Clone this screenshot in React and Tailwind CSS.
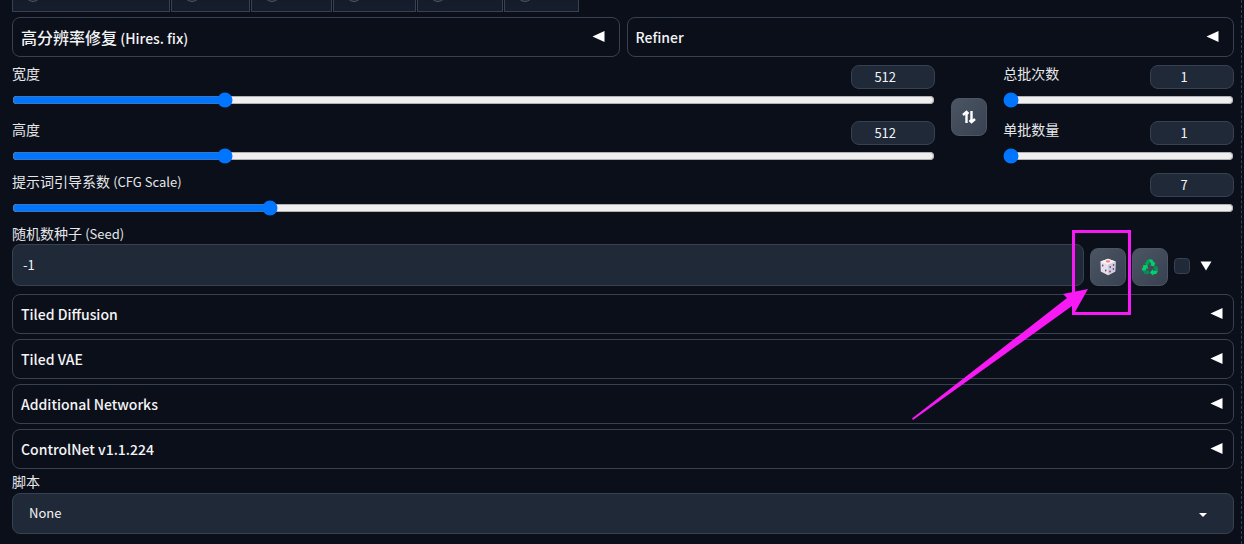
import { useState } from "react"

const samplers = [
  { name: "DPM++ 2M Karras", width: "w-[158px]" },
  { name: "DDIM", width: "w-[79px]" },
  { name: "PLMS", width: "w-[81px]" },
  { name: "UniPC", width: "w-[83px]" },
  { name: "Restart", width: "w-[86px]" },
  { name: "LCM", width: "w-[75px]" },
]

const SamplerTabs = () => (
  <div className="flex h-3 items-end gap-px overflow-hidden">
    {samplers.map((s) => (
      <label
        key={s.name}
        className={`flex h-10 shrink-0 items-end border border-[#374151] bg-linear-to-b from-[#111827] to-[#161d2d] px-3 pb-[9px] ${s.width}`}
      >
        <input
          type="radio"
          name="sampler"
          aria-label={s.name}
          className="size-4 appearance-none rounded-full border border-[#4b5563] bg-[#1f2937]"
        />
      </label>
    ))}
  </div>
)

const LeftArrow = () => (
  <svg width="13" height="12" viewBox="0 0 13 12" fill="#fff" aria-hidden="true">
    <path d="M0.5 5.5 12.5 0v11z" />
  </svg>
)

const Accordion = ({ title, className = "pr-2.5" }) => {
  const [open, setOpen] = useState(false)

  return (
    <button
      type="button"
      aria-expanded={open}
      onClick={() => setOpen(!open)}
      className={`flex h-10 w-full items-center justify-between rounded-lg border border-[#374151] pl-2 text-left text-sm font-medium text-gray-100 ${className}`}
    >
      <span>{title}</span>
      <LeftArrow />
    </button>
  )
}

const Slider = ({ id, label, min, max, initial }) => {
  const [value, setValue] = useState(initial)
  const onChange = (e) => setValue(e.target.value)

  return (
    <div>
      <div className="flex h-6 items-start justify-between">
        <label htmlFor={id} className="text-sm leading-4 text-gray-200">
          {label}
        </label>
        <input
          type="text"
          inputMode="numeric"
          aria-label={id}
          value={value}
          onChange={onChange}
          className="h-6 w-[84px] rounded-lg border border-[#374151] bg-[#1f2937] pr-4 pb-0.5 text-center text-[13px] text-gray-100"
        />
      </div>
      <input
        id={id}
        type="range"
        min={min}
        max={max}
        value={value}
        onChange={onChange}
        className="mt-[3px] block h-4 w-full"
      />
    </div>
  )
}

const ToolButton = ({ label, children }) => (
  <button
    type="button"
    aria-label={label}
    className="flex h-[38px] w-9 shrink-0 items-center justify-center rounded-lg border border-[#4b5563] bg-linear-to-br from-[#4b5563] to-[#374151] text-gray-100"
  >
    {children}
  </button>
)

const SwapIcon = () => (
  <svg width="14" height="14" viewBox="0 0 14 14" fill="none" stroke="#fff" strokeWidth="2.4">
    <path d="M4.5 13V2.5M1 5 4.5 1.8l2 2M9.5 1v10.5M7.5 10.2l2 2L13 9" />
  </svg>
)

const DiceIcon = () => (
  <svg width="18" height="18" viewBox="0 0 18 18">
    <path d="M9 0.8 16.6 3.6 16.2 13.6 9 17.2 1.8 13.6 1.4 3.6z" fill="#e6dfea" />
    <path d="M9 0.8 16.6 3.6 9 6.8 1.4 3.6z" fill="#f6f2f8" />
    <path d="M9 6.8 16.6 3.6 16.2 13.6 9 17.2z" fill="#d3c9dc" />
    <ellipse cx="9" cy="3.4" rx="2.2" ry="1.1" fill="#f8806f" />
    <g fill="#5f4d78">
      <ellipse cx="3.7" cy="7.6" rx="0.8" ry="1" />
      <ellipse cx="6.7" cy="12.6" rx="0.8" ry="1" />
      <ellipse cx="14.6" cy="7" rx="0.8" ry="1" />
      <ellipse cx="11.2" cy="9" rx="0.8" ry="1" />
      <ellipse cx="14.4" cy="11" rx="0.8" ry="1" />
      <ellipse cx="11" cy="13.4" rx="0.8" ry="1" />
    </g>
  </svg>
)

const RecycleIcon = () => (
  <svg width="18" height="18" viewBox="0 0 18 18">
    <path d="M6.5 1.5H10L7 7.5 3.6 5.6z" fill="#00a45a" />
    <path d="M8 1.5h3.2l1.9 3.2 1.3-.8-1.2 4.6-4.3-1.3 1.4-.8L8.6 3z" fill="#00d26a" />
    <path d="m1.5 7.5 4.6-1 1.2 4.4-1.5-.8L4.3 13H2L.8 11l1.6-2.8z" fill="#00d26a" />
    <path d="M1.6 12.6h6.6v3.7H3.7z" fill="#088c56" />
    <path d="m12.5 9.3 3.2-1.8 1.8 3.2-2.2 4.3h-1z" fill="#088c56" />
    <path d="m8.8 14.4 3.3-3.3v1.6h4.8l-1.7 3.4-3.1.2v1.5z" fill="#00d26a" />
  </svg>
)

// Highlight box and arrow over the random seed button
const Callout = () => (
  <svg
    className="pointer-events-none absolute -top-[18px] -left-[180px] z-10"
    width="222"
    height="192"
    viewBox="910 230 222 192"
    aria-hidden="true"
  >
    <rect x="1073.5" y="231.5" width="56" height="82" fill="none" stroke="#f81af5" strokeWidth="3" />
    <path d="M912 418.5 1067 298 1063 294 1088 289 1075 312 1072 306 913 420z" fill="#f81af5" />
  </svg>
)

export default function App() {
  const [seed, setSeed] = useState("-1")

  return (
    <div className="bg-[#0b0f19] pr-0.5 font-['Noto_Sans_CJK_SC',sans-serif]">
      <main className="flex min-h-screen flex-col border-r border-dashed border-[#374151] pr-[7px] pb-2.5 pl-3">
        <SamplerTabs />

        <div className="mt-[5px] grid grid-cols-2 gap-[7px]">
          <Accordion
            className="pr-3.5"
            title={
              <>
                <span className="text-base">高分辨率修复</span> (Hires. fix)
              </>
            }
          />
          <Accordion className="pr-3.5" title="Refiner" />
        </div>

        <div className="mt-2 flex gap-4">
          <div className="flex flex-[4] flex-col gap-[13px]">
            <Slider id="width" label="宽度" min={64} max={2048} initial={512} />
            <Slider id="height" label="高度" min={64} max={2048} initial={512} />
          </div>
          <div className="pt-[33px]">
            <ToolButton label="swap">
              <SwapIcon />
            </ToolButton>
          </div>
          <div className="flex flex-1 flex-col gap-[13px]">
            <Slider id="batch-count" label="总批次数" min={1} max={100} initial={1} />
            <Slider id="batch-size" label="单批数量" min={1} max={8} initial={1} />
          </div>
        </div>

        <div className="mt-[9px]">
          <Slider
            id="cfg-scale"
            label={
              <>
                提示词引导系数 <span className="text-[13px]">(CFG Scale)</span>
              </>
            }
            min={1}
            max={30}
            initial={7}
          />
        </div>

        <label htmlFor="seed" className="mt-[7px] text-sm leading-5 text-gray-200">
          随机数种子 <span className="text-[13px]">(Seed)</span>
        </label>
        <div className="flex items-end gap-1.5">
          <input
            id="seed"
            type="text"
            value={seed}
            onChange={(e) => setSeed(e.target.value)}
            className="h-[42px] min-w-0 flex-1 rounded-lg border border-[#374151] bg-[#1f2937] px-2.5 pb-0.5 text-[13px] text-gray-100"
          />
          <div className="relative">
            <ToolButton label="random seed">
              <DiceIcon />
            </ToolButton>
            <Callout />
          </div>
          <ToolButton label="reuse seed">
            <RecycleIcon />
          </ToolButton>
          <label className="flex h-10 w-15 items-center gap-2.5">
            <input
              type="checkbox"
              aria-label="extra"
              className="size-4 appearance-none rounded-sm border border-[#374151] bg-[#1f2937]"
            />
            <svg width="12" height="10" viewBox="0 0 12 10" fill="#fff" aria-hidden="true">
              <path d="M0.5 0.5h11L6 9.5z" />
            </svg>
          </label>
        </div>

        <div className="mt-2 flex flex-col gap-[5px]">
          <Accordion title="Tiled Diffusion" />
          <Accordion title="Tiled VAE" />
          <Accordion title="Additional Networks" />
          <Accordion title="ControlNet v1.1.224" />
        </div>

        <label htmlFor="script" className="py-0.5 text-sm leading-5 text-gray-200">
          脚本
        </label>
        <div className="relative">
          <select
            id="script"
            className="h-[41px] w-full appearance-none rounded-lg border border-[#374151] bg-[#1f2937] px-4 pb-0.5 text-[13px] text-gray-100"
          >
            <option>None</option>
          </select>
          <svg
            className="pointer-events-none absolute top-5 right-[27px]"
            width="8"
            height="4"
            viewBox="0 0 8 4"
            fill="#fff"
            aria-hidden="true"
          >
            <path d="M0 0h8L4 4z" />
          </svg>
        </div>
      </main>
    </div>
  )
}
